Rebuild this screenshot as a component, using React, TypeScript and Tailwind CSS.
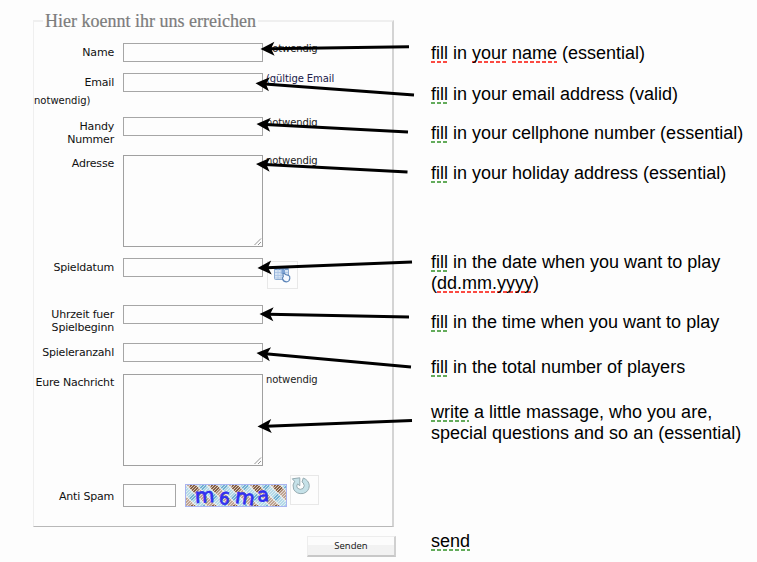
import type { ReactNode } from 'react';
import clsx from 'clsx';

const arrows = [
  { tip: [260.5, 49], tail: [409, 46.8] },
  { tip: [255.5, 83.3], tail: [414, 95] },
  { tip: [256.5, 124], tail: [408, 132] },
  { tip: [256, 164], tail: [407.5, 172] },
  { tip: [257.5, 268], tail: [412, 262] },
  { tip: [259.5, 314], tail: [409, 317] },
  { tip: [256.5, 353], tail: [411, 367] },
  { tip: [257.5, 426.5], tail: [412, 420.5] },
];

function Arrow({ tip, tail }: { tip: number[]; tail: number[] }) {
  const dx = tail[0] - tip[0];
  const dy = tail[1] - tip[1];
  const angle = (Math.atan2(dy, dx) * 180) / Math.PI;
  return (
    <g transform={`translate(${tip[0]} ${tip[1]}) rotate(${angle})`}>
      <path d={`M9 0H${Math.hypot(dx, dy)}`} stroke="#000" strokeWidth="3" />
      <path d="M0 0L14 -7L10.5 0L14 7Z" />
    </g>
  );
}

function Row({ label, className, labelClass, children }: { label: string; className: string; labelClass?: string; children: ReactNode }) {
  return (
    <div className={clsx('flex shrink-0 items-start', className)}>
      <label className={clsx('w-[80px] shrink-0 whitespace-nowrap text-right text-[11px] leading-[13px] tracking-[-0.2px]', labelClass ?? 'pt-[3px]')}>
        {label.split('|').map((line) => (
          <span key={line} className="block">{line}</span>
        ))}
      </label>
      <div className="ml-[9px] flex items-start">{children}</div>
    </div>
  );
}

function Field() {
  return <input className="h-[19px] w-[140px] border border-[#a6a6a6] bg-[#fdfdfd] outline-none" />;
}

function Area() {
  return (
    <div className="flex h-[92px] w-[140px] items-end justify-end border border-[#a0a0a0] bg-[#fdfdfd]">
      <svg width="9" height="9" viewBox="0 0 9 9" stroke="#888" strokeWidth="0.9">
        <path d="M1.5 8L8 1.5M5 8L8 5" />
      </svg>
    </div>
  );
}

function Hint({ children }: { children: ReactNode }) {
  return <span className="ml-[3px] whitespace-nowrap text-[10px] leading-[12px] tracking-[-0.1px] text-[#222]">{children}</span>;
}

function CalendarIcon() {
  return (
    <svg width="18" height="18" viewBox="0 0 18 18">
      <rect x="0.5" y="1.5" width="14" height="12" rx="1" fill="#d6e4f4" stroke="#8fadd3" />
      <path d="M1 3H14" stroke="#6f97ca" strokeWidth="2" />
      <path d="M1 6.5H14M1 9.5H14M1 12H14M4 3V13M7 3V13M10.5 3V13" stroke="#a9c3e4" strokeWidth="0.8" />
      <rect x="7.5" y="4" width="3.5" height="4" fill="#7ea3d4" />
      <path d="M9 8.500Q9 7 10.500 7.500L11.500 8.500L14.500 9.300Q16.200 10 15.800 12.500Q15.300 15.800 12.500 15.800Q9.500 15.800 8.600 13Q8.200 11.500 9.300 10.500Z" fill="#f5f9ff" stroke="#5b84b8" strokeWidth="1.2" />
    </svg>
  );
}

function RefreshIcon() {
  return (
    <svg width="20" height="19" viewBox="0 0 20 19">
      <path d="M1.300 2.800L8.800 1.800V9.800L6.600 7.900Q4.800 10 6.500 12.200Q9 14.500 12 12.500Q14.500 9.800 12.300 7L11 6L12.300 2Q17.800 4.300 18.300 9.500Q18.200 15.500 12.300 17.500Q5.500 18.500 2.600 13.200Q1 8.700 3.600 5.300Z" fill="#c5e1e8" stroke="#96abb1" strokeWidth="1" />
    </svg>
  );
}

function Captcha() {
  return (
    <svg width="102" height="23" viewBox="0 0 102 23" className="shrink-0 overflow-visible">
      <defs>
        <pattern id="blueBands" width="21" height="21" patternUnits="userSpaceOnUse">
          <rect width="21" height="21" fill="#b3d9e8" />
          <path d="M-5 26L26 -5M-5 5L5 -5M16 26L26 16" stroke="#6fb1d3" strokeWidth="5" />
        </pattern>
        <pattern id="brownBands" x="5" width="21" height="21" patternUnits="userSpaceOnUse">
          <path d="M-5 -5L26 26M16 -5L26 5M-5 16L5 26" stroke="#f0f2f0" strokeWidth="8.500" />
          <path d="M-5 -5L26 26M16 -5L26 5M-5 16L5 26" stroke="#c0a391" strokeWidth="6.500" />
          <path d="M0 0L7 7" stroke="#886044" strokeWidth="6.500" />
        </pattern>
        <pattern id="threads" width="3" height="3" patternUnits="userSpaceOnUse">
          <path d="M-1 4L4 -1M-1 1L1 -1M2 4L4 2" stroke="#f3f7f7" strokeWidth="0.7" />
        </pattern>
      </defs>
      <rect width="102" height="23" fill="url(#blueBands)" />
      <rect width="102" height="23" fill="url(#brownBands)" />
      <rect width="102" height="23" fill="url(#threads)" />
      <rect x="0.500" y="0.500" width="101" height="22" fill="none" stroke="#aab4f0" />
      <g fill="#3030f0" stroke="#3030f0" strokeWidth="0.8" fontFamily="DejaVu Sans" fontSize="20">
        <text x="10" y="18.500" transform="rotate(-3 20 14)">m</text>
        <text x="34" y="20.500" fontSize="17" transform="rotate(6 40 15)">6</text>
        <text x="50" y="20" transform="rotate(8 59 16)">m</text>
        <text x="72.500" y="17.500" fontSize="19" transform="rotate(-4 78 13)">a</text>
      </g>
    </svg>
  );
}

function Red({ children }: { children: ReactNode }) {
  return <span className="bg-[repeating-linear-gradient(90deg,#fb4a42_0_4px,transparent_4px_6px)] bg-[length:100%_2px] bg-bottom bg-no-repeat">{children}</span>;
}

function Green({ children }: { children: ReactNode }) {
  return <span className="bg-[repeating-linear-gradient(90deg,#63ab5b_0_4px,transparent_4px_6px)] bg-[length:100%_2px] bg-bottom bg-no-repeat">{children}</span>;
}

export default function App() {
  return (
    <div className="relative flex h-[562px] w-[757px] overflow-hidden bg-[#fdfdfd] font-['DejaVu_Sans',sans-serif] text-[#111]">
      {/* Contact form */}
      <div className="ml-[33px] flex w-[361px] shrink-0 flex-col pt-[10px]">
        <fieldset className="h-[517px] border border-t-2 border-r-2 border-[#efefef] border-r-[#d4d4d4] border-b-[#b8b8b8]">
          <legend className="ml-[9px] h-[22px] whitespace-nowrap px-[2px] font-['Liberation_Serif',serif] text-[18px] leading-[22px] text-[#7c7c7c] [-webkit-text-stroke:0.2px_#7c7c7c]">
            Hier koennt ihr uns erreichen
          </legend>
          <div className="flex flex-col pt-[11px]">
            <Row label="Name" className="h-[30px]">
              <Field />
              <Hint>notwendig</Hint>
            </Row>
            <Row label="Email" className="h-[22px]">
              <Field />
              <Hint><span className="text-[#20204a]">(gültige Email</span></Hint>
            </Row>
            <div className="h-[22px] text-[10px] leading-[12px]">notwendig)</div>
            <Row label="Handy|Nummer" className="h-[38px]">
              <Field />
              <Hint>notwendig</Hint>
            </Row>
            <Row label="Adresse" className="h-[103px]" labelClass="pt-[2px]">
              <Area />
              <Hint>notwendig</Hint>
            </Row>
            <Row label="Spieldatum" className="h-[47px]">
              <Field />
              <div className="ml-[4px] mt-[3px] flex h-[28px] w-[31px] items-start border border-[#e8e8e8] pl-[6px] pt-[4px]">
                <CalendarIcon />
              </div>
            </Row>
            <Row label="Uhrzeit fuer|Spielbeginn" className="h-[38px]">
              <Field />
            </Row>
            <Row label="Spieleranzahl" className="h-[31px]">
              <Field />
            </Row>
            <Row label="Eure Nachricht" className="h-[101px]" labelClass="pt-[2px]">
              <Area />
              <Hint>notwendig</Hint>
            </Row>
            <Row label="Anti Spam" className="h-[33px]" labelClass="pt-[15px]">
              <input className="mt-[9px] h-[23px] w-[53px] border border-[#a6a6a6] bg-[#fdfdfd] outline-none" />
              <div className="ml-[9px] mt-[9px]">
                <Captcha />
              </div>
              <div className="ml-[3px] flex h-[30px] w-[29px] border border-[#e8e8e8]">
                <RefreshIcon />
              </div>
            </Row>
          </div>
        </fieldset>
        <button className="-mr-[2px] mt-[9px] h-[21px] w-[89px] self-end border border-[#ededed] border-r-2 border-b-2 border-r-[#d0d0d0] border-b-[#c8c8c8] bg-linear-to-b from-[#fcfcfc] from-45% to-[#f2f2f2] to-45% font-['Open_Sans',sans-serif] text-[9.500px] leading-[18px] font-medium">
          Senden
        </button>
      </div>

      {/* Explanations */}
      <div className="ml-[37px] flex flex-col whitespace-nowrap pt-[43px] font-['Liberation_Sans',sans-serif] text-[18px] leading-[21px] text-black">
        <p><Red>fill</Red> in <Red>your</Red> <Red>name</Red> (essential)</p>
        <p className="mt-[20px]"><Green>fill</Green> in your email address (valid)</p>
        <p className="mt-[18px]"><Green>fill</Green> in your cellphone number (essential)</p>
        <p className="mt-[19px]"><Green>fill</Green> in your holiday address (essential)</p>
        <p className="mt-[68px]"><Green>fill</Green> in the date when you want to play<br />(<Red>dd.mm.yyyy</Red>)</p>
        <p className="mt-[18px]"><Green>fill</Green> in the time when you want to play</p>
        <p className="mt-[24px]"><Green>fill</Green> in the total number of players</p>
        <p className="mt-[24px]"><Green>write</Green> a little massage, who you are,<br />special questions and so an (essential)</p>
        <p className="mt-[87px]"><Green>send</Green></p>
      </div>

      {/* Arrows from the explanations to the fields */}
      <svg width="757" height="562" className="pointer-events-none absolute inset-0">
        {arrows.map((a, i) => (
          <Arrow key={i} tip={a.tip} tail={a.tail} />
        ))}
      </svg>
    </div>
  );
}
